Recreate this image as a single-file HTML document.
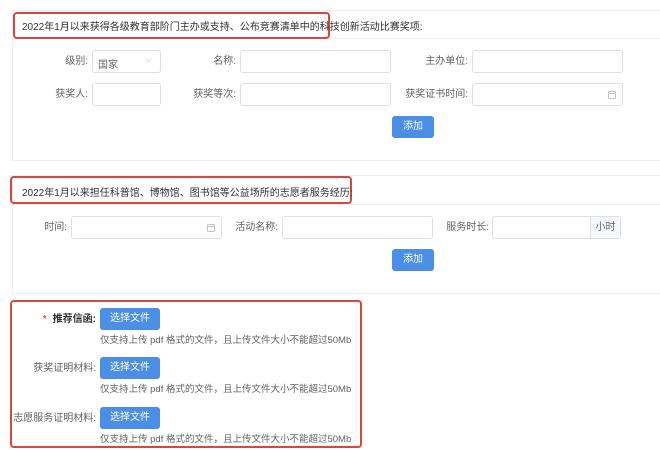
<!DOCTYPE html>
<html><head><meta charset="utf-8">
<style>
*{box-sizing:border-box;margin:0;padding:0}
body{width:660px;height:450px;background:#fff;position:relative;overflow:hidden;font-family:"Liberation Sans","Noto Sans CJK SC",sans-serif;font-size:10px;color:#606266}
.a{position:absolute}
.card{position:absolute;border:1px solid #ebeef5;border-right:none;background:#fff}
.red{position:absolute;border:2px solid #d9473a;border-radius:4px}
.hd{position:absolute;color:#303133;font-size:10px;white-space:nowrap}
.inp{position:absolute;height:23px;border:1px solid #dcdfe6;border-radius:3px;background:#fff}
.lb{position:absolute;text-align:right;white-space:nowrap;line-height:23px;color:#606266}
.btn{position:absolute;background:#4a8ee6;color:#fff;border-radius:3px;text-align:center;line-height:22px;font-size:10px}
.cal{position:absolute;right:6px;top:7px;width:8px;height:8px;border:1px solid #c0c4cc;border-radius:1px}
.cal:before{content:"";position:absolute;left:0;right:0;top:1px;border-top:1px solid #c0c4cc}
.tip{position:absolute;font-size:9.5px;color:#606266;white-space:nowrap}
</style></head><body>

<div class="card" style="left:12px;top:10px;width:650px;height:151px"></div>
<div class="a" style="left:12px;top:38px;width:650px;border-top:1px solid #ebeef5"></div>
<div class="red" style="left:13px;top:12px;width:317px;height:27px"></div>
<div class="hd" style="left:22px;top:18px">2022年1月以来获得各级教育部阶门主办或支持、公布竞赛清单中的科技创新活动比赛奖项:</div>

<div class="lb" style="left:40px;top:50px;width:48px">级别:</div>
<div class="inp" style="left:92px;top:50px;width:69px"><span class="a" style="left:5px;top:5px">国家</span><span class="a" style="left:52px;top:3px;color:#aaa;font-size:9px">⌵</span></div>
<div class="lb" style="left:180px;top:50px;width:56px">名称:</div>
<div class="inp" style="left:240px;top:50px;width:151px"></div>
<div class="lb" style="left:400px;top:50px;width:68px">主办单位:</div>
<div class="inp" style="left:472px;top:50px;width:151px"></div>

<div class="lb" style="left:30px;top:83px;width:58px">获奖人:</div>
<div class="inp" style="left:92px;top:83px;width:69px"></div>
<div class="lb" style="left:170px;top:83px;width:66px">获奖等次:</div>
<div class="inp" style="left:240px;top:83px;width:151px"></div>
<div class="lb" style="left:390px;top:83px;width:78px">获奖证书时间:</div>
<div class="inp" style="left:472px;top:83px;width:151px"><div class="cal"></div></div>

<div class="btn" style="left:392px;top:116px;width:42px">添加</div>

<div class="card" style="left:12px;top:175px;width:650px;height:119px"></div>
<div class="a" style="left:12px;top:204px;width:650px;border-top:1px solid #ebeef5"></div>
<div class="red" style="left:10px;top:176px;width:342px;height:28px"></div>
<div class="hd" style="left:22px;top:184px">2022年1月以来担任科普馆、博物馆、图书馆等公益场所的志愿者服务经历:</div>

<div class="lb" style="left:20px;top:216px;width:47px">时间:</div>
<div class="inp" style="left:71px;top:216px;width:151px"><div class="cal"></div></div>
<div class="lb" style="left:222px;top:216px;width:56px">活动名称:</div>
<div class="inp" style="left:282px;top:216px;width:151px"></div>
<div class="lb" style="left:430px;top:216px;width:59px">服务时长:</div>
<div class="inp" style="left:492px;top:216px;width:129px;"><div class="a" style="right:0;top:0;width:30px;height:21px;background:#f5f7fa;border-left:1px solid #dcdfe6;text-align:center;line-height:21px">小时</div></div>

<div class="btn" style="left:392px;top:249px;width:42px">添加</div>

<div class="red" style="left:10px;top:300px;width:352px;height:148px"></div>
<div class="lb" style="left:12px;top:308px;width:84px;color:#303133;font-weight:bold"><span style="color:#e4553e;margin-right:6px">*</span>推荐信函:</div>
<div class="btn" style="left:100px;top:308px;width:60px;height:22px">选择文件</div>
<div class="tip" style="left:100px;top:332px">仅支持上传 pdf 格式的文件，且上传文件大小不能超过50Mb</div>

<div class="lb" style="left:12px;top:357px;width:84px">获奖证明材料:</div>
<div class="btn" style="left:100px;top:357px;width:60px;height:22px">选择文件</div>
<div class="tip" style="left:100px;top:381px">仅支持上传 pdf 格式的文件，且上传文件大小不能超过50Mb</div>

<div class="lb" style="left:4px;top:407px;width:92px">志愿服务证明材料:</div>
<div class="btn" style="left:100px;top:407px;width:60px;height:22px">选择文件</div>
<div class="tip" style="left:100px;top:431px">仅支持上传 pdf 格式的文件，且上传文件大小不能超过50Mb</div>

</body></html>
